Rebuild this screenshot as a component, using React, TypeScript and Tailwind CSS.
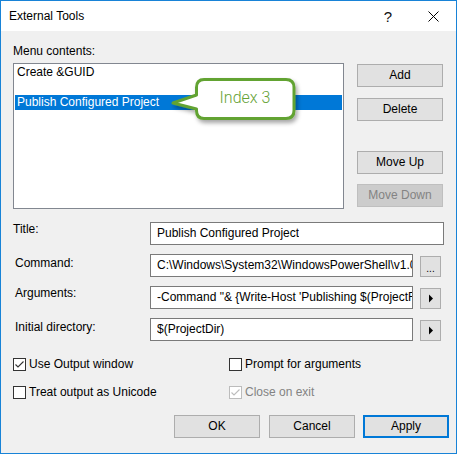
import React from "react";

const font = { fontFamily: '"Liberation Sans", Arial, sans-serif' };

function Btn({
  label,
  variant = "normal",
  className = "",
}: {
  label: string;
  variant?: "normal" | "disabled" | "default";
  className?: string;
}) {
  const look =
    variant === "disabled"
      ? "border border-[#bfbfbf] bg-[#cccccc] text-[#838383]"
      : variant === "default"
      ? "border-2 border-[#0078d7] bg-[#e1e1e1] text-black"
      : "border border-[#adadad] bg-[#e1e1e1] text-black";
  return (
    <div
      className={`flex h-[23px] w-[86px] items-center justify-center text-[12px] leading-[15px] ${look} ${className}`}
    >
      {label}
    </div>
  );
}

function Check({
  label,
  checked,
  disabled,
}: {
  label: string;
  checked?: boolean;
  disabled?: boolean;
}) {
  return (
    <div className="flex h-[13px] items-center">
      <div
        className={`flex h-[13px] w-[13px] items-center justify-center border ${
          disabled ? "border-[#bcbcbc] bg-white" : "border-[#333333] bg-white"
        }`}
      >
        {checked && (
          <svg width="11" height="11" viewBox="0 0 11 11">
            <path
              d="M1.5 5.5 L4 8 L9.5 2.5"
              fill="none"
              stroke={disabled ? "#bcbcbc" : "#333333"}
              strokeWidth="1.1"
            />
          </svg>
        )}
      </div>
      <span
        className={`ml-[3px] text-[12px] leading-[15px] whitespace-nowrap ${
          disabled ? "text-[#838383]" : "text-black"
        }`}
      >
        {label}
      </span>
    </div>
  );
}

function Field({ value, width }: { value: string; width: string }) {
  return (
    <div
      className={`flex h-[23px] items-center overflow-hidden whitespace-nowrap border border-[#7a7a7a] bg-white pl-[6px] text-[12px] leading-[15px] text-black ${width}`}
    >
      <span className="overflow-hidden">{value}</span>
    </div>
  );
}

function SideBtn({ children }: { children: React.ReactNode }) {
  return (
    <div className="ml-[7px] mt-[2px] flex h-[21px] w-[21px] items-center justify-center overflow-hidden border border-[#adadad] bg-[#e1e1e1]">
      {children}
    </div>
  );
}

const Arrow = () => (
  <svg width="6" height="9" viewBox="0 0 6 9">
    <path d="M1 0.5 L5 4.5 L1 8.5 Z" fill="#000" />
  </svg>
);

export default function App() {
  return (
    <div
      className="relative flex h-[454px] w-[457px] flex-col overflow-hidden border border-[#1883d7] bg-[#f0f0f0] text-black"
      style={font}
    >
      {/* title bar */}
      <div className="flex h-[30px] shrink-0 items-center bg-white pl-[8px]">
        <span className="text-[12px] leading-[15px]">External Tools</span>
        <span className="ml-auto mr-[36px] text-[15px] leading-[15px] text-[#111]">
          ?
        </span>
        <svg width="11" height="11" viewBox="0 0 11 11" className="mr-[17px]">
          <path d="M0.5 0.5 L10.5 10.5 M10.5 0.5 L0.5 10.5" stroke="#000" strokeWidth="1" />
        </svg>
      </div>

      <div className="flex flex-col pl-[12px]">
        <div className="mt-[13px] h-[15px] text-[12px] leading-[15px]">Menu contents:</div>

        <div className="mt-[4px] flex">
          <div className="h-[146px] w-[331px] border border-[#828790] bg-white px-[1px] pt-[1px] text-[12px]">
            <div className="h-[15px] pl-[2px] leading-[15px]">Create &amp;GUID</div>
            <div className="h-[15px]" />
            <div className="h-[15px] bg-[#0078d7] pl-[2px] leading-[15px] text-white">
              Publish Configured Project
            </div>
          </div>
          <div className="ml-[13px] flex flex-col pt-[1px]">
            <Btn label="Add" />
            <Btn label="Delete" className="mt-[11px]" />
            <Btn label="Move Up" className="mt-[30px]" />
            <Btn label="Move Down" variant="disabled" className="mt-[10px]" />
          </div>
        </div>

        <div className="mt-[13px] flex flex-col gap-[9px] text-[12px]">
          <div className="flex h-[23px]">
            <div className="w-[137px] leading-[15px]">Title:</div>
            <Field value="Publish Configured Project" width="w-[294px]" />
          </div>
          <div className="flex h-[23px]">
            <div className="mt-[2px] w-[137px] pl-[2px] leading-[15px]">Command:</div>
            <Field
              value="C:\Windows\System32\WindowsPowerShell\v1.0\powershell.exe"
              width="w-[263px]"
            />
            <SideBtn>
              <span className="pt-[5px] text-[10px] leading-[10px]">...</span>
            </SideBtn>
          </div>
          <div className="flex h-[23px]">
            <div className="w-[137px] pl-[2px] leading-[15px]">Arguments:</div>
            <Field
              value={"-Command \"& {Write-Host 'Publishing $(ProjectFileName)'; dotnet publish $(ProjectFileName)}\""}
              width="w-[263px]"
            />
            <SideBtn>
              <Arrow />
            </SideBtn>
          </div>
          <div className="flex h-[23px]">
            <div className="mt-[2px] w-[137px] pl-[2px] leading-[15px]">Initial directory:</div>
            <Field value="$(ProjectDir)" width="w-[263px]" />
            <SideBtn>
              <Arrow />
            </SideBtn>
          </div>
        </div>

        <div className="mt-[17px] flex">
          <div className="w-[216px]">
            <Check label="Use Output window" checked />
          </div>
          <Check label="Prompt for arguments" />
        </div>
        <div className="mt-[15px] flex">
          <div className="w-[216px]">
            <Check label="Treat output as Unicode" />
          </div>
          <Check label="Close on exit" checked disabled />
        </div>

        <div className="ml-[161px] mt-[16px] flex">
          <Btn label="OK" />
          <Btn label="Cancel" className="ml-[9px]" />
          <Btn label="Apply" variant="default" className="ml-[8px]" />
        </div>
      </div>

      {/* callout */}
      <div className="absolute left-[164px] top-[70px] h-[60px] w-[140px]">
        <svg width="140" height="60" viewBox="164 70 140 60" className="absolute left-0 top-0">
          <defs>
            <filter id="sh" x="-20%" y="-20%" width="140%" height="160%">
              <feDropShadow dx="2" dy="3" stdDeviation="2" floodColor="#000" floodOpacity="0.35" />
            </filter>
          </defs>
          <path
            d="M203 78.5 H285 Q293 78.5 293 86.5 V109.5 Q293 117.5 285 117.5 H203 Q195.5 117.5 195.5 109.5 V108 L172 102 L195.5 94 V86.5 Q195.5 78.5 203 78.5 Z"
            fill="#fff"
            stroke="#62a332"
            strokeWidth="3"
            strokeLinejoin="round"
            filter="url(#sh)"
          />
        </svg>
        <div
          className="absolute left-[31px] top-[18px] w-[98px] text-center text-[16px] leading-[18px] text-[#65a235]"
          style={{ fontFamily: "Roboto, sans-serif", fontWeight: 300 }}
        >
          Index 3
        </div>
      </div>
    </div>
  );
}
